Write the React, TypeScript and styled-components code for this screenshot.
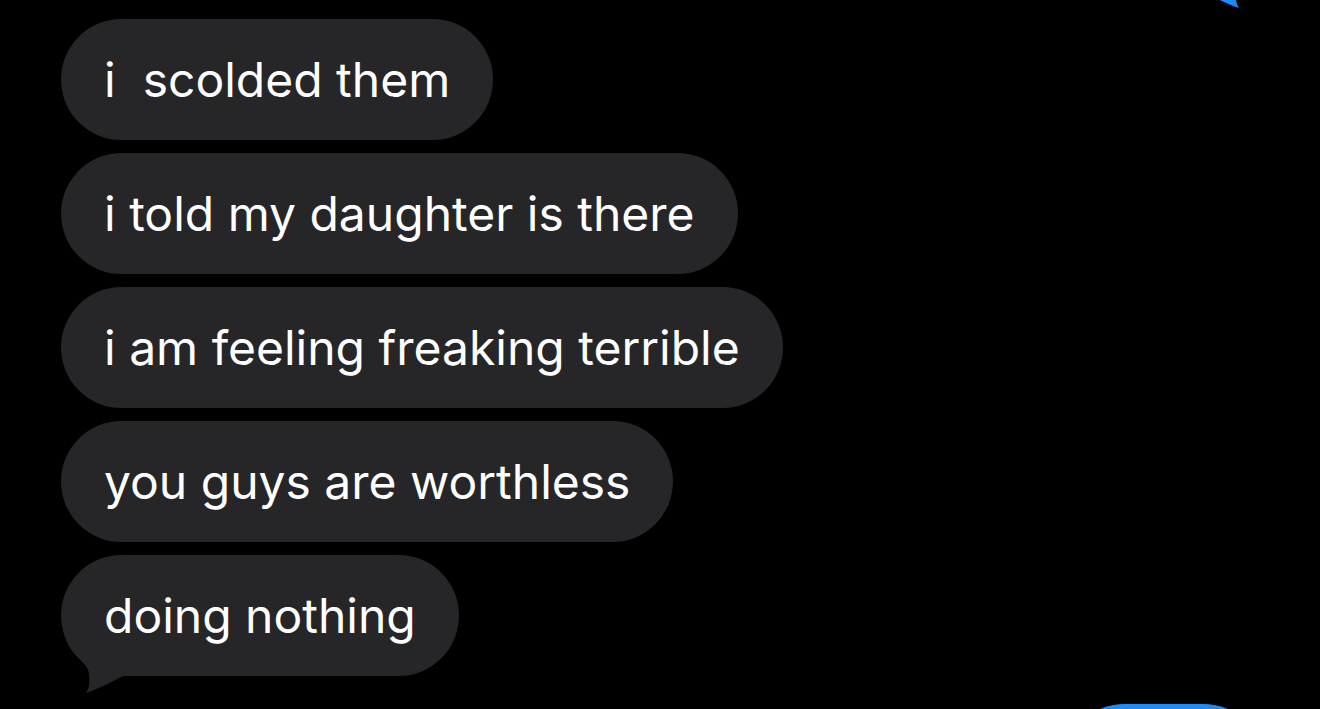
import React from "react";
import styled, { createGlobalStyle } from "styled-components";

const GlobalStyle = createGlobalStyle`
  html, body {
    margin: 0;
    padding: 0;
    background: #000;
  }
`;

const Screen = styled.div`
  width: 1320px;
  height: 709px;
  overflow: hidden;
  background: #000;
  font-family: Inter, "Noto Sans", sans-serif;
`;

const Thread = styled.div`
  display: flex;
  flex-direction: column;
  padding: 0 56px 0 61px;
`;

const Row = styled.div<{ $sent?: boolean; $gap?: number }>`
  display: flex;
  justify-content: ${(p) => (p.$sent ? "flex-end" : "flex-start")};
  margin-top: ${(p) => p.$gap ?? 13}px;
`;

const Bubble = styled.div<{ $sent?: boolean; $width?: number }>`
  position: relative;
  box-sizing: border-box;
  height: 121px;
  display: flex;
  align-items: center;
  padding: 0 43px;
  border-radius: 61px;
  background: ${(p) => (p.$sent ? "#1f8bfa" : "#262629")};
  color: #fff;
  font-size: 48px;
  white-space: pre;
  ${(p) => (p.$width ? `width: ${p.$width}px;` : "")}
`;

// tail drawn below the bubble's bottom corner
const Tail = styled.svg<{ $sent?: boolean }>`
  position: absolute;
  bottom: -24px;
  width: 80px;
  height: 60px;
  ${(p) => (p.$sent ? "right: 0; transform: scaleX(-1);" : "left: 0;")}
`;

const BubbleTail = ({ sent }: { sent?: boolean }) => (
  <Tail $sent={sent} viewBox="0 0 80 60">
    <path
      d="M5 0 C12 18 27 22 28 34 C29 44 28 48 25 53 Q40 48 64 35 L64 0 Z"
      fill={sent ? "#1f8bfa" : "#262629"}
    />
  </Tail>
);

const messages = [
  "i  scolded them",
  "i told my daughter is there",
  "i am feeling freaking terrible",
  "you guys are worthless",
  "doing nothing",
];

export default function App() {
  return (
    <Screen>
      <GlobalStyle />
      <Thread>
        <Row $sent $gap={-130}>
          <Bubble $sent $width={420}>
            {" "}
            <BubbleTail sent />
          </Bubble>
        </Row>
        {messages.map((m, i) => (
          <Row key={m} $gap={i === 0 ? 28 : 13}>
            <Bubble>
              {m}
              {i === messages.length - 1 && <BubbleTail />}
            </Bubble>
          </Row>
        ))}
        <Row $sent $gap={28}>
          <Bubble $sent $width={200}>
            {" "}
          </Bubble>
        </Row>
      </Thread>
    </Screen>
  );
}
